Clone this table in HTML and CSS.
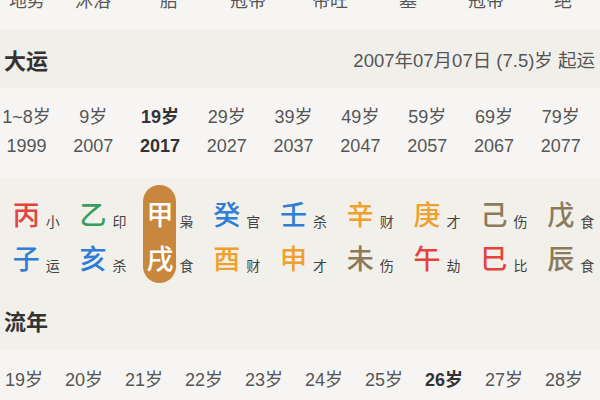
FILE: index.html
```html
<!DOCTYPE html>
<html lang="zh">
<head>
<meta charset="utf-8">
<link rel="stylesheet" href="styles.css">
</head>
<body>
<div class="page">
  <div class="top-strip">
    <span>地势</span><span>沐浴</span><span>胎</span><span>冠带</span><span>帝旺</span><span>墓</span><span>冠带</span><span>绝</span>
  </div>

  <div class="sec-head">
    <span class="sec-title">大运</span>
    <span class="sec-note">2007年07月07日 (7.5)岁 起运</span>
  </div>

  <div class="dy-rows">
    <div class="dy-grid">
      <span>1~8岁</span><span>9岁</span><span class="cur">19岁</span><span>29岁</span><span>39岁</span><span>49岁</span><span>59岁</span><span>69岁</span><span>79岁</span>
    </div>
    <div class="dy-grid">
      <span>1999</span><span>2007</span><span class="cur">2017</span><span>2027</span><span>2037</span><span>2047</span><span>2057</span><span>2067</span><span>2077</span>
    </div>
  </div>

  <div class="pillars">
    <div class="pillar">
      <div class="chars"><span class="c-red">丙</span><span class="c-blue">子</span></div>
      <div class="labels"><span>小</span><span>运</span></div>
    </div>
    <div class="pillar">
      <div class="chars"><span class="c-green">乙</span><span class="c-blue">亥</span></div>
      <div class="labels"><span>印</span><span>杀</span></div>
    </div>
    <div class="pillar">
      <div class="chars active"><span>甲</span><span>戌</span></div>
      <div class="labels"><span>枭</span><span>食</span></div>
    </div>
    <div class="pillar">
      <div class="chars"><span class="c-blue">癸</span><span class="c-orange">酉</span></div>
      <div class="labels"><span>官</span><span>财</span></div>
    </div>
    <div class="pillar">
      <div class="chars"><span class="c-blue">壬</span><span class="c-orange">申</span></div>
      <div class="labels"><span>杀</span><span>才</span></div>
    </div>
    <div class="pillar">
      <div class="chars"><span class="c-orange">辛</span><span class="c-brown">未</span></div>
      <div class="labels"><span>财</span><span>伤</span></div>
    </div>
    <div class="pillar">
      <div class="chars"><span class="c-orange">庚</span><span class="c-red">午</span></div>
      <div class="labels"><span>才</span><span>劫</span></div>
    </div>
    <div class="pillar">
      <div class="chars"><span class="c-brown">己</span><span class="c-red">巳</span></div>
      <div class="labels"><span>伤</span><span>比</span></div>
    </div>
    <div class="pillar">
      <div class="chars"><span class="c-brown">戊</span><span class="c-brown">辰</span></div>
      <div class="labels"><span>食</span><span>食</span></div>
    </div>
  </div>

  <div class="sec-head sec-head-ln">
    <span class="sec-title">流年</span>
  </div>

  <div class="ln-rows">
    <div class="ln-grid">
      <span>19岁</span><span>20岁</span><span>21岁</span><span>22岁</span><span>23岁</span><span>24岁</span><span>25岁</span><span class="cur">26岁</span><span>27岁</span><span>28岁</span>
    </div>
  </div>
</div>
</body>
</html>
```

FILE: styles.css
```css
html, body {
  margin: 0;
  padding: 0;
}
body {
  width: 600px;
  height: 400px;
  overflow: hidden;
  background: #f6f5f2;
  font-family: "Liberation Sans", "Noto Sans CJK SC", sans-serif;
  color: #555;
}
.page {
  width: 600px;
  overflow: hidden;
}

.top-strip {
  margin-top: -13px;
  height: 42px;
  display: grid;
  grid-template-columns: 54px 78px 74px 84px 80px 76px 80px 74px;
  line-height: 28px;
  font-size: 18px;
  text-align: center;
  background: #f6f5f2;
  color: #555;
}

.sec-head {
  height: 59px;
  background: #f1efea;
  display: flex;
  align-items: center;
  justify-content: space-between;
  padding: 0 5px 0 4px;
}
.sec-title {
  font-size: 22px;
  font-weight: bold;
  color: #333;
  font-family: "Noto Sans CJK SC", sans-serif;
}
.sec-note {
  font-size: 18.5px;
  color: #555;
}
.sec-head-ln {
  height: 60px;
  background: #f2f0eb;
}

.dy-rows {
  background: #f6f5f3;
  padding: 15px 0 17px;
}
.dy-grid {
  display: grid;
  grid-template-columns: repeat(9, 66.8px);
  margin-left: -7px;
  line-height: 29px;
  font-size: 18px;
  text-align: center;
  white-space: nowrap;
}
.cur {
  font-weight: bold;
  color: #333;
}

.pillars {
  background: #f2f0eb;
  display: grid;
  grid-template-columns: repeat(9, 66.8px);
  margin-left: -7px;
  padding: 7px 0 7px;
  font-family: "Noto Sans CJK SC", sans-serif;
}
.pillar {
  display: grid;
  grid-template-columns: 1fr 33px 1fr;
}
.chars {
  grid-column: 2;
  display: flex;
  flex-direction: column;
  align-items: center;
  padding: 7px 0 3px;
  border-radius: 17px;
}
.chars span {
  height: 44px;
  line-height: 44px;
  font-size: 27px;
  font-weight: 500;
}
.chars.active {
  background: #c8873c;
  color: #fff;
}
.labels {
  grid-column: 3;
  display: flex;
  flex-direction: column;
  padding: 7px 0 3px 3px;
}
.labels span {
  height: 44px;
  line-height: 44px;
  font-size: 14px;
  color: #444;
  transform: translateY(7px);
}
.c-red { color: #e4443d; }
.c-green { color: #3a9d5d; }
.c-blue { color: #2f7dd6; }
.c-orange { color: #efa02e; }
.c-brown { color: #8c7b5b; }

.ln-rows {
  background: #f6f5f3;
  padding: 16px 0 10px;
}
.ln-grid {
  display: grid;
  grid-template-columns: repeat(10, 60px);
  margin-left: -6px;
  line-height: 29px;
  font-size: 18px;
  text-align: center;
  white-space: nowrap;
}
```
